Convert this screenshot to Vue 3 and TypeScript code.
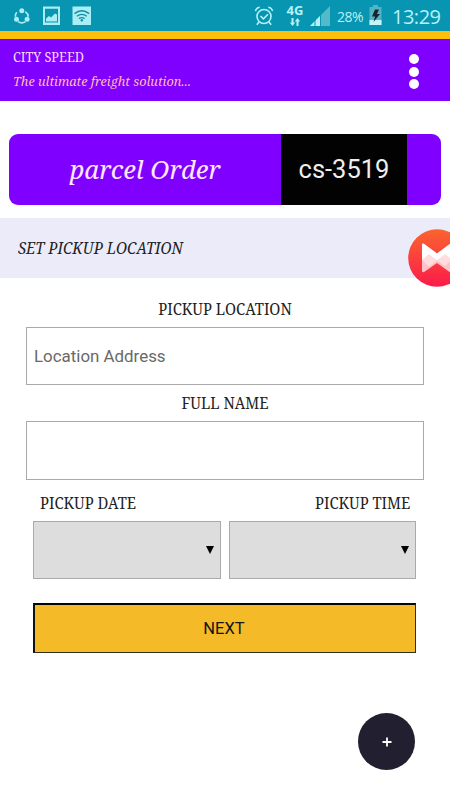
<script setup lang="ts">
import { ref } from 'vue'

const address = ref('')
const fullName = ref('')
const orderCode = 'cs-3519'
</script>

<template>
  <main class="screen">
    <div class="status">
      <svg class="status-left" width="100" height="30" viewBox="0 0 100 30">
        <g fill="none" stroke="#a9eef5" stroke-width="1.7">
          <path d="M16.8 12.2a6.5 6.5 0 0 0-1.5 4.6M18 21.6a7 7 0 0 0 7.6 0M28.3 16.8a6.8 6.8 0 0 0-3-5.2" />
        </g>
        <g fill="#a9eef5">
          <circle cx="21.8" cy="10.8" r="2.5" /><circle cx="16.5" cy="19.2" r="2.5" /><circle cx="27.1" cy="19.2" r="2.5" />
          <path fill-rule="evenodd" d="M43 6.5h17V25H43zM45 8.8v13.7h13V8.8z" />
          <path d="M46 21.5v-3l3-2.5 2 1.5 4-4 2 1v7z" />
          <path d="M72.5 6.5H91V25H72.5z" />
        </g>
        <g fill="none" stroke="#168da3" stroke-width="1.4">
          <path d="M74.5 13.6q7.3-5.6 14.6 0M76.8 16.2q5-3.7 10 0M79 18.6q2.8-2 5.6 0" />
        </g>
        <circle cx="81.8" cy="20.3" r="1.2" fill="#168da3" />
      </svg>
      <div class="status-right">
        <svg class="alarm" width="20" height="21" viewBox="0 0 20 21" fill="none" stroke="#b5f2f7" stroke-width="1.6">
          <circle cx="10" cy="11.5" r="7" />
          <path d="M6.5 11l2.9 2.8 4.6-4.5M5 17l-2.2 2.7M15 17l2.2 2.7M1.5 6.2Q2 2.8 5.7 2.2M18.5 6.2Q18 2.8 14.3 2.2" />
        </svg>
        <div class="network">
          <span>4G</span>
          <svg width="12" height="9" viewBox="0 0 12 9" fill="#b5f2f7">
            <path d="M2.5 0h2v4.5h1.7L3.5 8 .8 4.5h1.7zM7.5 8h2V3.5h1.7L8.5 0 5.8 3.5h1.7z" />
          </svg>
        </div>
        <svg class="signal" width="20" height="20" viewBox="0 0 20 20">
          <path d="M0 20L20 0v20z" fill="#54bac9" />
          <path d="M0 20L10 10v10z" fill="#b5f2f7" />
          <path d="M5 14v6M10.5 9v11" stroke="#0795b2" stroke-width="1" />
        </svg>
        <span class="percent">28%</span>
        <svg class="battery" width="13" height="20" viewBox="0 0 13 20">
          <path d="M4 0h5v2h3.5v18H.5V2H4z" fill="#54b4c4" />
          <path d="M.5 15h12v5H.5z" fill="#c3f6fa" />
          <path d="M6 4.5h4L8 9h3l-6.500 8L6 11.500H3z" fill="#17262e" />
        </svg>
        <span class="clock">13:29</span>
      </div>
    </div>

    <header class="header">
      <div>
        <h1 class="brand">CITY SPEED</h1>
        <p class="tagline">The ultimate freight solution...</p>
      </div>
      <button class="more" aria-label="More"><i></i><i></i><i></i></button>
    </header>

    <section class="order">
      <h2 class="order-title">parcel Order</h2>
      <span class="order-code">{{ orderCode }}</span>
    </section>

    <section class="section-bar">
      <h3 class="section-title">SET PICKUP LOCATION</h3>
    </section>

    <form class="form" @submit.prevent>
      <label class="label" for="address">PICKUP LOCATION</label>
      <input id="address" v-model="address" class="field address-field" placeholder="Location Address" />
      <label class="label name-label" for="name">FULL NAME</label>
      <input id="name" v-model="fullName" class="field name-field" />
      <div class="pair-labels">
        <span class="date-label">PICKUP DATE</span>
        <span class="time-label">PICKUP TIME</span>
      </div>
      <div class="pair">
        <button type="button" class="picker" aria-label="Pickup date"><i class="arrow"></i></button>
        <button type="button" class="picker" aria-label="Pickup time"><i class="arrow"></i></button>
      </div>
      <button class="next">NEXT</button>
    </form>

    <svg class="bubble" width="42" height="58" viewBox="0 0 42 58">
      <defs>
        <linearGradient id="bubble-fill" x1="0" y1="0" x2="0" y2="1">
          <stop offset="0" stop-color="#fb642e" />
          <stop offset="1" stop-color="#fa1b4b" />
        </linearGradient>
      </defs>
      <circle cx="29" cy="29" r="28.8" fill="url(#bubble-fill)" />
      <path d="M14 16.500q0-3 2.500-1.300L29 24.500l12.500-9.300 3 1v26l-3 .8L29 34 16.500 42.800Q14 44 14 41.500z" fill="#ffc3c7" />
      <path d="M14 16.500q0-3 2.500-1.300L29 24.500l12.500-9.300 3 1V31L37 25.500l-8 6-8-6-7 5.500z" fill="#fff" />
      <path d="M14 31l7-5.500 8 6-8 6z" fill="#ffdcdd" />
      <path d="M29 31.500l8-6 7 5.500-7 6z" fill="#ffdcdd" />
    </svg>

    <button class="fab" aria-label="Add">
      <svg width="10" height="10" viewBox="0 0 10 10"><path d="M5 .5v9M.5 5h9" stroke="#fff" stroke-width="1.8" /></svg>
    </button>
  </main>
</template>

<style>
body {
  margin: 0;
  background: #fff;
}
</style>

<style scoped>
* {
  box-sizing: border-box;
}
.screen {
  position: relative;
  width: 450px;
  height: 800px;
  overflow: hidden;
  background: #fff;
  color: #222;
  font-family: "Noto Serif", "Liberation Serif", serif;
}
h1, h2, h3, p {
  margin: 0;
  font-weight: 400;
}
button {
  padding: 0;
  border: 0;
  font: inherit;
}
.status {
  display: flex;
  justify-content: space-between;
  height: 31px;
  background: #0795b2;
  color: #b5f2f7;
}
.status-right {
  display: flex;
  align-items: flex-start;
  width: 196px;
}
.alarm {
  margin-top: 5px;
}
.network {
  display: flex;
  flex-direction: column;
  align-items: center;
  width: 18px;
  margin: 3px 0 0 12px;
  font: 700 13px/15px "Open Sans", sans-serif;
}
.signal {
  margin: 6px 0 0 6px;
}
.percent {
  width: 29px;
  margin: 7px 0 0 7px;
  font: 400 14px/20px "Open Sans", sans-serif;
  letter-spacing: -0.5px;
}
.battery {
  margin: 5px 0 0 3px;
}
.clock {
  margin: 4px 0 0 10px;
  font: 400 20px/26px "Open Sans", sans-serif;
  letter-spacing: -0.5px;
}
.header {
  display: flex;
  justify-content: space-between;
  height: 70px;
  padding: 9px 31px 0 13px;
  border-top: 8px solid #fcc00c;
  background: #8000ff;
}
.brand {
  color: #fbd9ff;
  font-size: 13.5px;
  line-height: 18px;
  transform: scaleX(0.94);
  transform-origin: left;
}
.tagline {
  margin-top: 5px;
  color: #ffbfae;
  font-size: 13.2px;
  font-style: italic;
  line-height: 20px;
  transform: scaleX(0.962);
  transform-origin: left;
}
.more {
  display: flex;
  flex-direction: column;
  gap: 2.5px;
  margin-top: 6px;
  background: none;
}
.more i {
  width: 10px;
  height: 10px;
  border-radius: 50%;
  background: #fff;
}
.order {
  display: flex;
  width: 432px;
  height: 71px;
  margin: 33px 0 0 9px;
  border-radius: 9px;
  background: #8000ff;
  overflow: hidden;
}
.order-title {
  width: 272px;
  color: #fde6ff;
  font-size: 26px;
  font-style: italic;
  line-height: 71px;
  text-align: center;
  transform: scaleX(0.988);
}
.order-code {
  width: 126px;
  background: #020202;
  color: #eee;
  font: 400 25.5px/71px Roboto, sans-serif;
  text-align: center;
}
.section-bar {
  height: 60px;
  margin-top: 13px;
  padding-left: 18px;
  background: #ebebfa;
}
.section-title {
  font-size: 15.5px;
  font-style: italic;
  line-height: 60px;
  transform: scaleX(0.96);
  transform-origin: left;
}
.form {
  display: flex;
  flex-direction: column;
  padding: 21px 26px 0;
  font-size: 15.5px;
}
.label {
  height: 20px;
  line-height: 20px;
  text-align: center;
  transform: scaleX(0.96);
}
.field {
  width: 398px;
  height: 59px;
  margin: 8px 0 0;
  padding: 0 7px;
  border: 1px solid #aaa;
  border-radius: 0;
  outline: 0;
  background: #fff;
  font: 400 16.9px Roboto, sans-serif;
}
.address-field {
  height: 58px;
}
.field::placeholder {
  color: #696969;
  opacity: 1;
}
.name-label {
  margin-top: 8px;
}
.pair-labels {
  display: flex;
  justify-content: space-between;
  padding: 0 14px;
  margin-top: 13px;
  line-height: 20px;
}
.date-label {
  transform: scaleX(0.96);
  transform-origin: left;
}
.time-label {
  transform: scaleX(0.96);
  transform-origin: right;
}
.pair {
  display: grid;
  grid-template-columns: 188px 187px;
  gap: 8px;
  margin: 8px 7px 0;
}
.picker {
  display: flex;
  align-items: center;
  justify-content: flex-end;
  height: 58px;
  padding: 0 6px 0 0;
  border: 1px solid #aaa;
  background: #ddd;
}
.arrow {
  border: 4px solid transparent;
  border-top: 8px solid #000;
  border-bottom: 0;
}
.next {
  height: 50px;
  margin: 24px 8px 0 7px;
  padding: 0 2px 1px 0;
  border: 1px solid #31301f;
  border-top: 2px solid #050505;
  border-left: 2px solid #111;
  background: #f4ba27;
  color: #141414;
  font: 400 16.5px Roboto, sans-serif;
}
.bubble {
  position: absolute;
  top: 229px;
  right: 0;
}
.fab {
  position: absolute;
  top: 713px;
  left: 358px;
  display: grid;
  place-items: center;
  width: 57px;
  height: 57px;
  border-radius: 50%;
  background: #211f30;
}
</style>
